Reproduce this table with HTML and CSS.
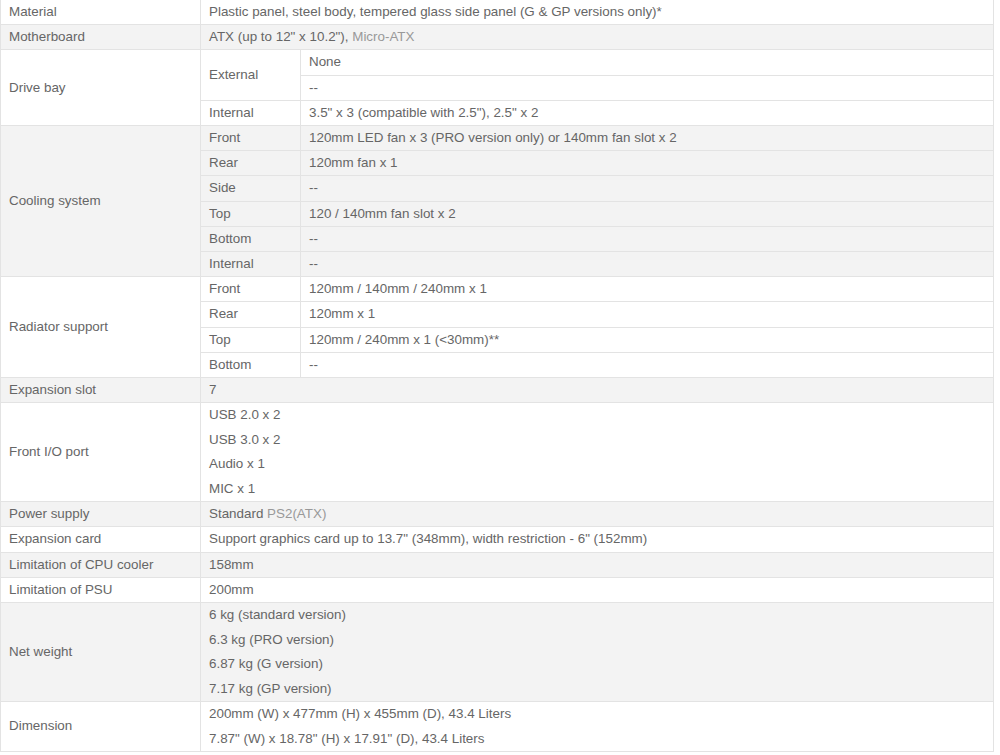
FILE: index.html
```html
<!DOCTYPE html>
<html>
<head>
<meta charset="utf-8">
<link rel="stylesheet" href="styles.css">
</head>
<body>
<table class="spec">
  <colgroup><col class="c1"><col class="c2"><col class="c3"></colgroup>
  <tbody>
    <tr><td>Material</td><td colspan="2">Plastic panel, steel body, tempered glass side panel (G &amp; GP versions only)*</td></tr>
    <tr class="alt"><td>Motherboard</td><td colspan="2">ATX (up to 12" x 10.2"), <span class="link">Micro-ATX</span></td></tr>
    <tr><td rowspan="3">Drive bay</td><td rowspan="2">External</td><td>None</td></tr>
    <tr><td>--</td></tr>
    <tr><td>Internal</td><td>3.5" x 3 (compatible with 2.5"), 2.5" x 2</td></tr>
    <tr class="alt"><td rowspan="6">Cooling system</td><td>Front</td><td>120mm LED fan x 3 (PRO version only) or 140mm fan slot x 2</td></tr>
    <tr class="alt"><td>Rear</td><td>120mm fan x 1</td></tr>
    <tr class="alt"><td>Side</td><td>--</td></tr>
    <tr class="alt"><td>Top</td><td>120 / 140mm fan slot x 2</td></tr>
    <tr class="alt"><td>Bottom</td><td>--</td></tr>
    <tr class="alt"><td>Internal</td><td>--</td></tr>
    <tr><td rowspan="4">Radiator support</td><td>Front</td><td>120mm / 140mm / 240mm x 1</td></tr>
    <tr><td>Rear</td><td>120mm x 1</td></tr>
    <tr><td>Top</td><td>120mm / 240mm x 1 (&lt;30mm)**</td></tr>
    <tr><td>Bottom</td><td>--</td></tr>
    <tr class="alt"><td>Expansion slot</td><td colspan="2">7</td></tr>
    <tr><td>Front I/O port</td><td colspan="2" class="multi"><div>USB 2.0 x 2</div><div>USB 3.0 x 2</div><div>Audio x 1</div><div>MIC x 1</div></td></tr>
    <tr class="alt"><td>Power supply</td><td colspan="2">Standard <span class="link">PS2(ATX)</span></td></tr>
    <tr><td>Expansion card</td><td colspan="2">Support graphics card up to 13.7" (348mm), width restriction - 6" (152mm)</td></tr>
    <tr class="alt"><td>Limitation of CPU cooler</td><td colspan="2">158mm</td></tr>
    <tr><td>Limitation of PSU</td><td colspan="2">200mm</td></tr>
    <tr class="alt"><td>Net weight</td><td colspan="2" class="multi"><div>6 kg (standard version)</div><div>6.3 kg (PRO version)</div><div>6.87 kg (G version)</div><div>7.17 kg (GP version)</div></td></tr>
    <tr><td>Dimension</td><td colspan="2" class="multi"><div>200mm (W) x 477mm (H) x 455mm (D), 43.4 Liters</div><div>7.87" (W) x 18.78" (H) x 17.91" (D), 43.4 Liters</div></td></tr>
  </tbody>
</table>
</body>
</html>
```

FILE: styles.css
```css
html, body {
  margin: 0;
  padding: 0;
  background: #ffffff;
}
body {
  font-family: "Liberation Sans", Arial, sans-serif;
  font-size: 13.4px;
  color: #666666;
}
.spec {
  width: 994px;
  border-collapse: collapse;
  table-layout: fixed;
}
.spec col.c1 { width: 200px; }
.spec col.c2 { width: 100px; }
.spec td {
  border: 1px solid #e3e3e3;
  padding: 0 8px;
  height: 24.2px;
  line-height: 24.2px;
  vertical-align: middle;
  white-space: nowrap;
}
.spec tr:first-child td {
  border-top: none;
}
.spec tr.alt td {
  background: #f3f3f3;
}
.spec td.multi div {
  line-height: 24.5px;
}
.link {
  color: #999999;
}
```
